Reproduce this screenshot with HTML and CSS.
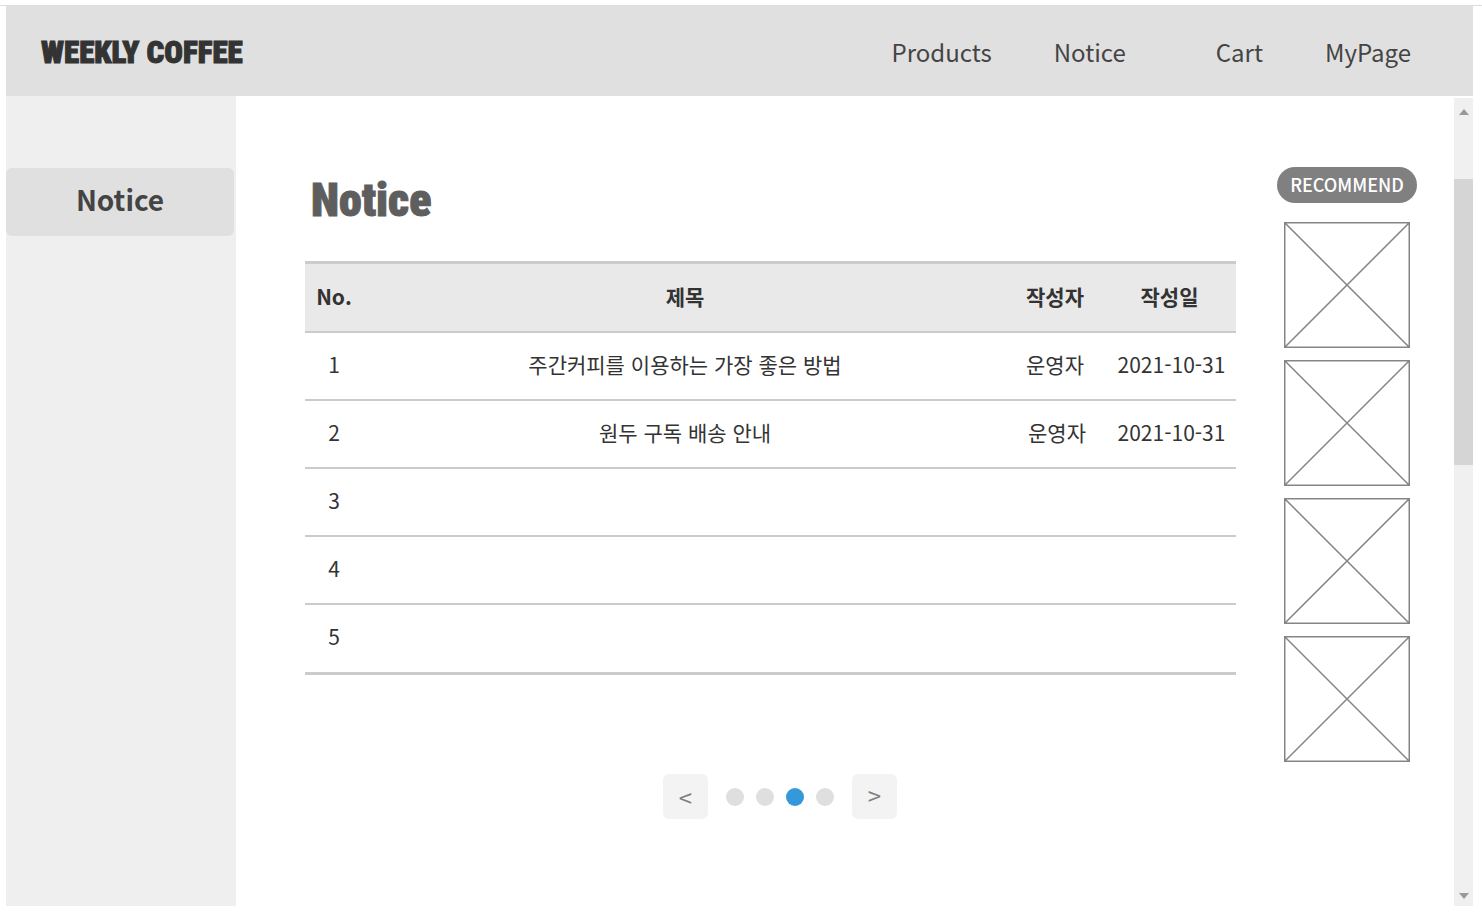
FILE: index.html
```html
<!DOCTYPE html>
<html lang="ko">
<head>
<meta charset="utf-8">
<meta name="viewport" content="width=device-width, initial-scale=1">
<title>Weekly Coffee - Notice</title>
<link rel="stylesheet" href="styles.css">
</head>
<body>
<div class="page">
  <header class="header">
    <a class="logo" href="#">WEEKLY COFFEE</a>
    <nav class="menu" aria-label="Main">
      <a href="#">Products</a>
      <a href="#">Notice</a>
      <a class="menu-user" href="#">Cart</a>
      <a href="#">MyPage</a>
    </nav>
  </header>
  <div class="body">
    <nav class="sidebar" aria-label="Section">
      <a class="side-link" href="#" aria-current="page">Notice</a>
    </nav>
    <main class="main">
      <h1 class="title">Notice</h1>
      <table class="board">
        <colgroup><col class="col-no"><col><col class="col-author"><col class="col-date"></colgroup>
        <thead>
          <tr><th scope="col">No.</th><th scope="col">제목</th><th class="author" scope="col">작성자</th><th class="date" scope="col">작성일</th></tr>
        </thead>
        <tbody>
          <tr><td>1</td><td>주간커피를 이용하는 가장 좋은 방법</td><td class="author">운영자</td><td>2021-10-31</td></tr>
          <tr><td>2</td><td>원두 구독 배송 안내</td><td>운영자</td><td>2021-10-31</td></tr>
          <tr><td>3</td><td></td><td></td><td></td></tr>
          <tr><td>4</td><td></td><td></td><td></td></tr>
          <tr><td>5</td><td></td><td></td><td></td></tr>
        </tbody>
      </table>
      <nav class="pager" aria-label="Pages">
        <button class="arrow" type="button" aria-label="Previous">&lt;</button>
        <div class="dots">
          <button class="dot" type="button" aria-label="Page 1"></button>
          <button class="dot" type="button" aria-label="Page 2"></button>
          <button class="dot dot-active" type="button" aria-label="Page 3" aria-current="page"></button>
          <button class="dot" type="button" aria-label="Page 4"></button>
        </div>
        <button class="arrow arrow-next" type="button" aria-label="Next">&gt;</button>
      </nav>
    </main>
    <aside class="recommend">
      <h2 class="badge">RECOMMEND</h2>
      <svg class="thumb" viewBox="0 0 126 126"><path d="M.75.75h124.500v124.500H.75zM.75.75l124.500 124.500M125.250.75L.75 125.250"/></svg>
      <svg class="thumb" viewBox="0 0 126 126"><path d="M.75.75h124.500v124.500H.75zM.75.75l124.500 124.500M125.250.75L.75 125.250"/></svg>
      <svg class="thumb" viewBox="0 0 126 126"><path d="M.75.75h124.500v124.500H.75zM.75.75l124.500 124.500M125.250.75L.75 125.250"/></svg>
      <svg class="thumb" viewBox="0 0 126 126"><path d="M.75.75h124.500v124.500H.75zM.75.75l124.500 124.500M125.250.75L.75 125.250"/></svg>
    </aside>
    <div class="scroll" aria-hidden="true">
      <svg class="scroll-arrow" viewBox="0 0 10 6"><path d="M5 0l5 6H0z"/></svg>
      <div class="track"><div class="handle"></div></div>
      <svg class="scroll-arrow" viewBox="0 0 10 6"><path d="M0 0h10L5 6z"/></svg>
    </div>
  </div>
</div>
</body>
</html>
```
FILE: styles.css
```css
* { box-sizing: border-box; }

body {
  margin: 0;
  background: #fff;
  color: #333;
  font-family: "Noto Sans CJK KR", sans-serif;
}

a { color: inherit; text-decoration: none; }

.page {
  display: flex;
  flex-direction: column;
  min-height: 100vh;
  padding: 5px 0 15px;
}

.page::before {
  content: "";
  height: 1px;
  background: #dcdcdc;
}

.header {
  display: flex;
  align-items: center;
  justify-content: space-between;
  height: 90px;
  margin: 0 9px 0 6px;
  padding: 0 62px 0 35px;
  background: #e0e0e0;
}

.logo,
.title {
  font-family: Impact, "Roboto Condensed", "Liberation Sans", sans-serif;
  font-weight: 900;
}

.logo {
  padding-top: 2px;
  font-size: 31px;
  white-space: nowrap;
  -webkit-text-stroke: 1px #333;
}

.menu {
  display: flex;
  gap: 62px;
  color: #444;
  font-size: 24px;
}

.menu-user { margin-left: 28px; }

.body {
  display: flex;
  flex: 1;
  margin: 0 9px 0 6px;
}

.sidebar {
  flex: 0 0 230px;
  padding: 72px 2px 0 0;
  background: #efefef;
}

.side-link {
  display: block;
  padding-bottom: 6px;
  border-radius: 6px;
  background: #e0e0e0;
  color: #444;
  font-size: 28px;
  font-weight: 700;
  line-height: 62px;
  text-align: center;
}

.main {
  flex: 1;
  min-width: 0;
  padding: 72px 0 0 69px;
}

.title {
  margin: 0 0 29px;
  padding-left: 6px;
  color: #5e5e5e;
  font-size: 46px;
  line-height: 64px;
  -webkit-text-stroke: 1px #5e5e5e;
}

.board {
  width: 100%;
  table-layout: fixed;
  border-spacing: 0;
  border-top: 3px solid #cbcbcb;
  border-bottom: 1px solid #cbcbcb;
  font-size: 21px;
  line-height: 30px;
}

.col-no { width: 58px; }
.col-author { width: 100px; }
.col-date { width: 129px; }

.board th,
.board td {
  height: 68px;
  padding: 0 0 4px;
  border-bottom: 2px solid #cbcbcb;
  text-align: center;
  white-space: nowrap;
}

.board th {
  height: 69px;
  background: #e9e9e9;
  font-weight: 700;
}

.board .author,
.board .date { padding-right: 4px; }

.board tbody tr:last-child td {
  height: 69px;
  padding-bottom: 5px;
}

.pager {
  display: flex;
  align-items: center;
  justify-content: center;
  gap: 18px;
  margin-top: 99px;
  padding-left: 19px;
}

.arrow {
  width: 45px;
  height: 45px;
  padding: 0;
  border: 0;
  border-radius: 6px;
  background: #f3f3f3;
  color: #808080;
  font: 400 24px/45px "Noto Sans CJK KR", sans-serif;
}

.arrow-next { padding-bottom: 4px; line-height: 41px; }

.dots { display: flex; gap: 12px; }

.dot {
  width: 18px;
  height: 18px;
  padding: 0;
  border: 0;
  border-radius: 50%;
  background: #dfdfdf;
}

.dot-active { background: #3498db; }

.recommend {
  display: flex;
  flex: 0 0 218px;
  flex-direction: column;
  align-items: center;
  gap: 12px;
  padding: 71px 37px 0 41px;
}

.badge {
  margin: 0 0 7px;
  padding: 0 13px 2px;
  border-radius: 18px;
  background: #808080;
  color: #fff;
  font-size: 18px;
  font-weight: 500;
  line-height: 34px;
}

.thumb {
  width: 126px;
  height: 126px;
  fill: none;
  stroke: #858585;
  stroke-width: 1.5;
}

.scroll {
  display: flex;
  flex: 0 0 19px;
  flex-direction: column;
  align-items: center;
  margin-top: 2px;
  padding: 11px 0 7px;
  background: #f0f0f0;
}

.scroll-arrow {
  width: 10px;
  height: 6px;
  fill: #999;
}

.track {
  flex: 1;
  width: 100%;
  padding-top: 64px;
}

.handle {
  height: 40%;
  background: #d5d5d5;
}
```
